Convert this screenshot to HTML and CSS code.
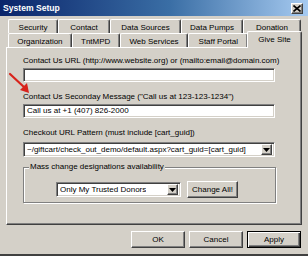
FILE: index.html
```html
<!DOCTYPE html>
<html>
<head>
<meta charset="utf-8">
<link rel="stylesheet" href="styles.css">
</head>
<body>
<div class="window">
  <div class="titlebar">
    <span class="title">System Setup</span>
    <span class="close"><svg width="8" height="7" viewBox="0 0 8 7"><path d="M0.5 0.5 L7.5 6.5 M7.5 0.5 L0.5 6.5" stroke="#000" stroke-width="1.6"/></svg></span>
  </div>
  <div class="tabs">
    <div class="tabrow back">
      <div class="tab t-security">Security</div>
      <div class="tab t-contact">Contact</div>
      <div class="tab t-sources">Data Sources</div>
      <div class="tab t-pumps">Data Pumps</div>
      <div class="tab t-donation">Donation</div>
    </div>
    <div class="tabrow front">
      <div class="tab t-org">Organization</div>
      <div class="tab t-tnt">TntMPD</div>
      <div class="tab t-web">Web Services</div>
      <div class="tab t-staff">Staff Portal</div>
      <div class="tab t-give selected">Give Site</div>
    </div>
  </div>
  <div class="panel">
    <div class="field-label">Contact Us URL (http://www.website.org) or (mailto:email@domain.com)</div>
    <div class="textbox"></div>
    <div class="field-label">Contact Us Seconday Message ("Call us at 123-123-1234")</div>
    <div class="textbox">Call us at +1 (407) 826-2000</div>
    <div class="field-label">Checkout URL Pattern (must include [cart_guid])</div>
    <div class="combo combo-wide">
      <span class="combo-text">~/giftcart/check_out_demo/default.aspx?cart_guid=[cart_guid]</span>
      <span class="drop"><svg width="7" height="4" viewBox="0 0 7 4"><path d="M0 0 H7 L3.5 4 Z" fill="#000"/></svg></span>
    </div>
    <fieldset class="group">
      <legend>Mass change designations availability</legend>
      <div class="group-row">
        <div class="combo combo-small">
          <span class="combo-text">Only My Trusted Donors</span>
          <span class="drop"><svg width="7" height="4" viewBox="0 0 7 4"><path d="M0 0 H7 L3.5 4 Z" fill="#000"/></svg></span>
        </div>
        <button class="btn btn-change">Change All!</button>
      </div>
    </fieldset>
  </div>
  <div class="footer">
    <button class="btn btn-foot">OK</button>
    <button class="btn btn-foot">Cancel</button>
    <button class="btn btn-foot default">Apply</button>
  </div>
  <svg class="arrow" width="30" height="30" viewBox="0 0 30 30">
    <path d="M2 3 L17 17" stroke="#d8231b" stroke-width="2.2" stroke-linecap="round"/>
    <path d="M21 22 L12 19 L19 12 Z" fill="#d8231b"/>
  </svg>
</div>
</body>
</html>
```
FILE: styles.css
```css
* { box-sizing: border-box; }
html, body { margin: 0; padding: 0; }
body {
  background: #d4d0c8;
  font-family: "Liberation Sans", Arial, sans-serif;
  font-size: 8px;
  color: #000;
}
.window {
  position: relative;
  width: 308px;
  height: 256px;
  background: #d4d0c8;
  display: flex;
  flex-direction: column;
  overflow: hidden;
  border-bottom: 2px solid #404040;
}
.titlebar {
  height: 16px;
  flex: none;
  background: linear-gradient(to right, #0a246a 0%, #3a6ea5 55%, #a6caf0 100%);
  display: flex;
  align-items: center;
  justify-content: space-between;
  padding: 0 5px 0 3px;
}
.title {
  color: #fff;
  font-weight: bold;
  font-size: 8.6px;
}
.close {
  width: 12px;
  height: 11px;
  background: #d4d0c8;
  border: 1px solid;
  border-color: #fff #404040 #404040 #fff;
  box-shadow: inset -1px -1px #808080;
  display: flex;
  align-items: center;
  justify-content: center;
}
.tabs {
  flex: none;
  margin-top: 3px;
  padding: 0 7px 0 8px;
}
.tabrow {
  display: flex;
  height: 14px;
}
.tab {
  height: 14px;
  display: flex;
  align-items: center;
  justify-content: center;
  white-space: nowrap;
  border-top: 1px solid #fff;
  border-left: 1px solid #fff;
  border-right: 1px solid #404040;
  box-shadow: inset -1px 0 #808080;
  border-radius: 2px 2px 0 0;
  padding-top: 1px;
}
.t-security { width: 50px; }
.t-contact { width: 52px; }
.t-sources { width: 71px; }
.t-pumps { width: 62px; }
.t-donation { width: 58px; }
.t-org { width: 64px; }
.t-tnt { width: 48px; }
.t-web { width: 69px; }
.t-staff { width: 60px; }
.t-give { width: 51px; }
.tab.selected {
  position: relative;
  z-index: 2;
  height: 17px;
  margin: -2px -1px -1px -1px;
  width: 55px;
  background: #d4d0c8;
  align-items: flex-start;
  padding-top: 3px;
}
.panel {
  flex: none;
  margin: 0 6px;
  height: 178px;
  border: 1px solid;
  border-color: #fff #404040 #404040 #fff;
  box-shadow: inset -1px -1px #808080;
  padding: 7px 0 0 16px;
  display: flex;
  flex-direction: column;
  align-items: flex-start;
}
.field-label {
  height: 12px;
  line-height: 12px;
  white-space: nowrap;
}
.textbox, .combo {
  background: #fff;
  border: 1px solid;
  border-color: #808080 #fff #fff #808080;
  box-shadow: inset 1px 1px #404040, inset -1px -1px #d4d0c8;
  white-space: nowrap;
}
.textbox {
  width: 252px;
  height: 14px;
  line-height: 12px;
  padding-left: 3px;
  margin: 1px 0 9px;
}
.combo {
  display: flex;
  align-items: center;
  justify-content: space-between;
  padding: 0 2px 0 3px;
  height: 15px;
}
.combo-wide { width: 252px; margin-top: 3px; }
.combo-text { overflow: hidden; }
.drop {
  flex: none;
  width: 11px;
  height: 11px;
  background: #d4d0c8;
  border: 1px solid;
  border-color: #fff #404040 #404040 #fff;
  box-shadow: inset -1px -1px #808080;
  display: flex;
  align-items: center;
  justify-content: center;
}
.group {
  width: 253px;
  height: 41px;
  margin: 5px 0 0 0;
  padding: 0;
  border: 1px solid #808080;
  box-shadow: 1px 1px 0 #fff, inset 1px 1px 0 #fff;
  min-width: 0;
}
.group legend {
  padding: 0 1px;
  margin-left: 5px;
  background: #d4d0c8;
  line-height: 10px;
  white-space: nowrap;
}
.group-row {
  display: flex;
  align-items: center;
  gap: 6px;
  margin: 9px 0 0 32px;
}
.combo-small { width: 125px; }
.btn {
  font-family: inherit;
  font-size: 8px;
  background: #d4d0c8;
  color: #000;
  border: 1px solid;
  border-color: #fff #404040 #404040 #fff;
  box-shadow: inset -1px -1px #808080;
  padding: 0;
  margin: 0;
}
.btn-change { width: 51px; height: 17px; }
.footer {
  flex: none;
  display: flex;
  justify-content: flex-end;
  gap: 4px;
  padding: 6px 7px 0 0;
}
.btn-foot { width: 54px; height: 17px; }
.btn-foot.default {
  border-color: #000;
  box-shadow: inset 1px 1px #fff, inset -1px -1px #404040, inset -2px -2px #808080;
}
.arrow {
  position: absolute;
  left: 8px;
  top: 71px;
}
```
